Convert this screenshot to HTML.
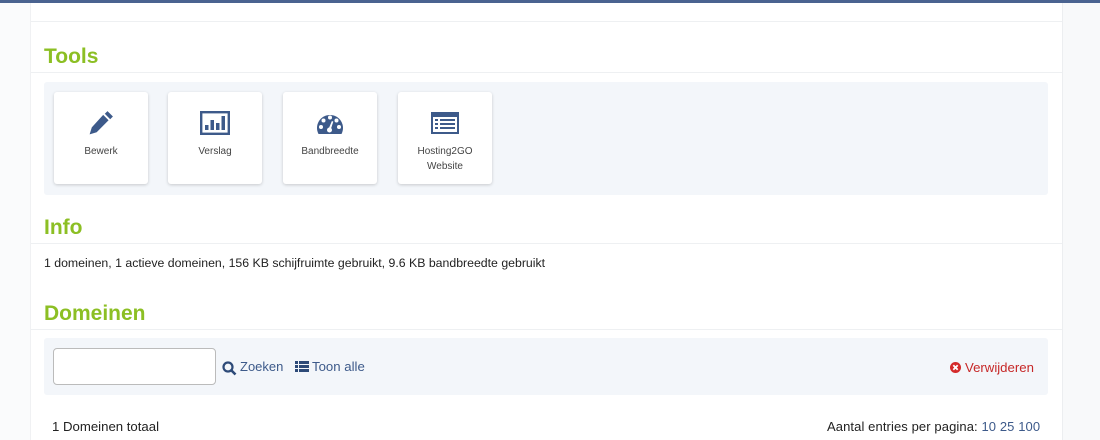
<!DOCTYPE html>
<html><head><style>
body{margin:0;width:1100px;height:440px;overflow:hidden;background:#fff;font-family:"Liberation Sans",sans-serif;position:relative}
.top{position:absolute;left:0;top:0;width:1100px;height:3px;background:#4a6390}
.lside{position:absolute;left:0;top:3px;width:30px;height:437px;background:#fafbfc;border-right:1px solid #f0f1f3}
.rside{position:absolute;left:1062px;top:3px;width:38px;height:437px;background:#f8f9fa;border-left:1px solid #eceef0}
.hr{position:absolute;left:31px;width:1031px;height:1px;background:#eef0f2}
h2{position:absolute;left:44px;margin:0;font-size:21px;font-weight:bold;color:#8cbf24}
.panel{position:absolute;left:44px;width:1004px;background:#f3f6fa;border-radius:3px}
.tile{position:absolute;top:10px;width:94px;height:92px;background:#fff;border-radius:3px;box-shadow:0 1px 3px rgba(0,0,0,.18);text-align:center;font-size:10px;color:#444;line-height:15px}
.tile svg{position:absolute;left:35px;top:19px}
.tile span{position:absolute;left:0;right:0;top:52px}
.t{position:absolute;font-size:12.3px;color:#222}
</style></head><body>
<div class="top"></div><div class="lside"></div><div class="rside"></div>
<div class="hr" style="top:21px"></div>
<h2 style="top:45px">Tools</h2>
<div class="hr" style="top:72px"></div>
<div class="panel" style="top:82px;height:113px">
 <div class="tile" style="left:10px"><svg width="26" height="26" viewBox="0 0 24 24" style="left:34px;top:18px"><path d="M18 1l5 5-2.5 2.5-5-5zM14 4.5l5 5L8 20.5 1.5 22.5 3.5 16z" fill="#3d5a8a"/></svg><span>Bewerk</span></div>
 <div class="tile" style="left:124px"><svg width="30" height="24" viewBox="0 0 30 24" style="left:32px"><rect x="1.2" y="1.2" width="27.6" height="21.6" fill="none" stroke="#3d5a8a" stroke-width="2.4"/><rect x="5" y="14" width="3.5" height="5" fill="#3d5a8a"/><rect x="10.5" y="9" width="3.5" height="10" fill="#3d5a8a"/><rect x="16" y="12" width="3.5" height="7" fill="#3d5a8a"/><rect x="21.5" y="5" width="3.5" height="14" fill="#3d5a8a"/></svg><span>Verslag</span></div>
 <div class="tile" style="left:239px"><svg width="30" height="24" viewBox="0 0 30 24" style="left:32px;top:20px"><path d="M3.5 22A13 13 0 1 1 26.5 22z" fill="#3d5a8a"/><g fill="#fff"><circle cx="6" cy="15" r="2"/><circle cx="8.5" cy="8.5" r="2"/><circle cx="15" cy="5.5" r="2"/><circle cx="21.5" cy="8.5" r="2"/><circle cx="24" cy="15" r="2"/><circle cx="14.5" cy="18" r="2.5"/><path d="M13.3 17.5l3.6-8.5 1.4.6-2.8 8.6z"/></g></svg><span>Bandbreedte</span></div>
 <div class="tile" style="left:354px"><svg width="30" height="24" viewBox="0 0 30 24" style="left:32px"><rect x="1" y="1" width="28" height="22" fill="#3d5a8a"/><rect x="3" y="6" width="24" height="15" fill="#fff"/><g fill="#3d5a8a"><rect x="5" y="8" width="3" height="2"/><rect x="10" y="8" width="15" height="2"/><rect x="5" y="12" width="3" height="2"/><rect x="10" y="12" width="15" height="2"/><rect x="5" y="16" width="3" height="2"/><rect x="10" y="16" width="15" height="2"/></g></svg><span>Hosting2GO<br>Website</span></div>
</div>
<h2 style="top:216px">Info</h2>
<div class="hr" style="top:243px"></div>
<div class="t" style="left:44px;top:256px">1 domeinen, 1 actieve domeinen, 156 KB schijfruimte gebruikt, 9.6 KB bandbreedte gebruikt</div>
<h2 style="top:302px">Domeinen</h2>
<div class="hr" style="top:329px"></div>
<div class="panel" style="top:338px;height:57px">
 <div style="position:absolute;left:9px;top:10px;width:161px;height:35px;background:#fff;border:1px solid #bbb;border-radius:4px"></div>
 <svg style="position:absolute;left:178px;top:23px" width="15" height="15" viewBox="0 0 15 15"><circle cx="6" cy="6" r="4.5" fill="none" stroke="#2d4a78" stroke-width="2.2"/><path d="M9 9l4.5 4.5" stroke="#2d4a78" stroke-width="2.6"/></svg>
 <div class="t" style="left:196px;top:21px;font-size:13px;color:#3d5a8a">Zoeken</div>
 <svg style="position:absolute;left:251px;top:23px" width="14" height="11" viewBox="0 0 14 11"><g fill="#2d4a78"><rect x="0" y="0" width="3" height="3"/><rect x="4" y="0" width="10" height="3"/><rect x="0" y="4" width="3" height="3"/><rect x="4" y="4" width="10" height="3"/><rect x="0" y="8" width="3" height="3"/><rect x="4" y="8" width="10" height="3"/></g></svg>
 <div class="t" style="left:268px;top:21px;font-size:13.2px;color:#3d5a8a">Toon alle</div>
 <svg style="position:absolute;left:906px;top:24px" width="11" height="11" viewBox="0 0 11 11"><circle cx="5.5" cy="5.5" r="5.5" fill="#d42a2a"/><path d="M3.3 3.3l4.4 4.4M7.7 3.3l-4.4 4.4" stroke="#fff" stroke-width="1.8"/></svg>
 <div class="t" style="left:921px;top:22px;font-size:13.2px;color:#c62828">Verwijderen</div>
</div>
<div class="t" style="left:52px;top:419px;font-size:13.2px">1 Domeinen totaal</div>
<div class="t" style="left:827px;top:419px;font-size:13px;letter-spacing:0.1px">Aantal entries per pagina: <span style="color:#3d5a8a">10 25 100</span></div>
</body></html>
